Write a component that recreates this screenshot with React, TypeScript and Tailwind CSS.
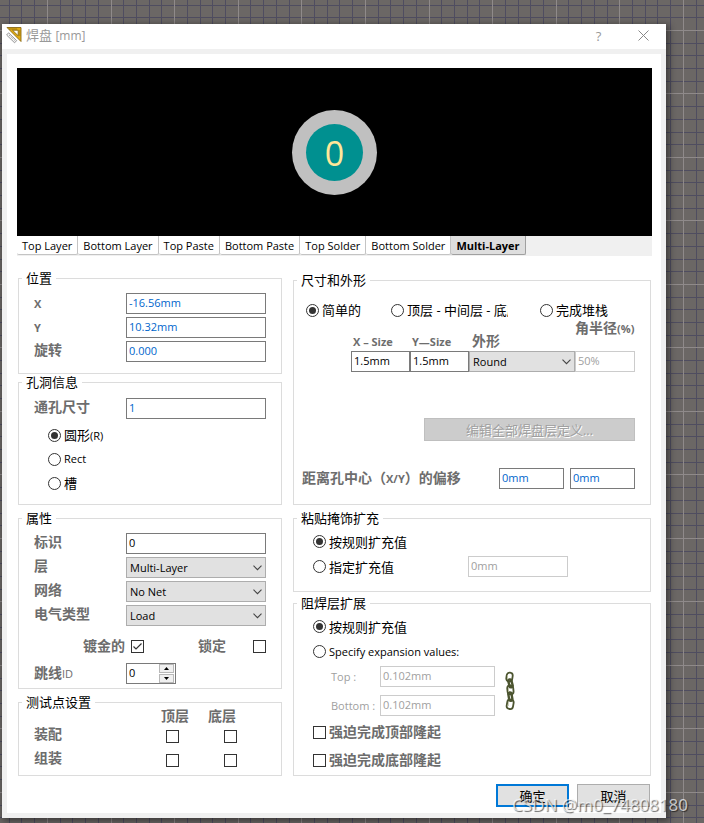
import { useId, useState } from "react";
import type { ReactNode } from "react";

const gridX = Array.from({ length: 200 }, (_, k) => ({
  at: Math.floor(47.4 + (k - 3) * 12.72),
  major: (k - 3) % 5 === 0,
}));
const gridY = Array.from({ length: 120 }, (_, k) => ({
  at: Math.floor(30.4 + (k - 2) * 12.7),
  major: (k - 2) % 5 === 0,
}));

function WorkspaceGrid() {
  return (
    <svg className="absolute inset-0 h-full w-full" aria-hidden="true">
      {[false, true].map((major) => (
        <g key={String(major)} fill={major ? "#8f8a8a" : "#4f4d60"}>
          {gridX.filter((l) => l.major === major).map((l) => (
            <rect key={`x${l.at}`} x={l.at} y="0" width="1" height="100%" />
          ))}
          {gridY.filter((l) => l.major === major).map((l) => (
            <rect key={`y${l.at}`} x="0" y={l.at} width="100%" height="1" />
          ))}
        </g>
      ))}
    </svg>
  );
}

function Group({ title, className, children }: { title: string; className: string; children: ReactNode }) {
  return (
    <fieldset className="min-w-0 border border-[#dcdcdc]">
      <legend className="ml-[3px] px-1 text-[13px] leading-4 text-black">{title}</legend>
      <div className={className}>{children}</div>
    </fieldset>
  );
}

const captionClass = "whitespace-nowrap text-[14px] font-bold leading-4 text-[#6d6d6d]";
const boxClass = "block h-[21px] w-full min-w-0 border bg-white px-[2px] pb-[3px] text-[11px] leading-4 outline-none";

function TextBox({ id, value, tone = "blue", label }: { id?: string; value: string; tone?: "blue" | "black" | "off"; label?: string }) {
  const tones = {
    blue: "border-[#7a7a7a] text-[#0066cc]",
    black: "border-[#7a7a7a] text-black",
    off: "border-[#cccccc] text-[#a0a0a0]",
  };
  return (
    <input id={id} aria-label={label} type="text" defaultValue={value} disabled={tone === "off"} className={`${boxClass} ${tones[tone]}`} />
  );
}

function Field({ label, value, tone }: { label: string; value: string; tone?: "blue" | "black" }) {
  const id = useId();
  const latin = label < "a";
  return (
    <>
      <label htmlFor={id} className={latin ? "self-center text-[11px] font-bold leading-4 text-[#6d6d6d]" : `pt-px ${captionClass}`}>
        {label}
      </label>
      <TextBox id={id} value={value} tone={tone} />
    </>
  );
}

function DropDown({ id, options }: { id: string; options: string[] }) {
  return (
    <div className="relative">
      <select id={id} className="block h-[21px] w-full appearance-none border border-[#adadad] bg-[#e1e1e1] pl-[3px] text-[11px] leading-4 text-black outline-none">
        {options.map((o) => (
          <option key={o}>{o}</option>
        ))}
      </select>
      <svg className="pointer-events-none absolute top-[8px] right-[4px]" width="9" height="6" viewBox="0 0 9 6" fill="none" stroke="#444" strokeWidth="1.1">
        <path d="M0.5 0.7 4.5 4.7 8.5 0.7" />
      </svg>
    </div>
  );
}

function DropField({ label, options }: { label: string; options: string[] }) {
  const id = useId();
  return (
    <>
      <label htmlFor={id} className={`pt-px ${captionClass}`}>{label}</label>
      <DropDown id={id} options={options} />
    </>
  );
}

function Radio({ name, checked, children, className = "" }: { name: string; checked?: boolean; children: ReactNode; className?: string }) {
  return (
    <label className={`flex items-center gap-[3px] whitespace-nowrap text-[13px] leading-4 text-black ${className}`}>
      <input
        type="radio"
        name={name}
        defaultChecked={checked}
        className="size-[13px] shrink-0 appearance-none rounded-full border border-[#333] bg-white bg-clip-content p-[2px] checked:bg-[#333]"
      />
      {children}
    </label>
  );
}

function Check({ id, label, checked }: { id?: string; label?: string; checked?: boolean }) {
  return (
    <span className="relative inline-block size-[13px] shrink-0">
      <input id={id} aria-label={label} type="checkbox" defaultChecked={checked} className="peer block size-[13px] appearance-none border border-[#333] bg-white" />
      <svg className="pointer-events-none absolute inset-0 hidden peer-checked:block" width="13" height="13" fill="none" stroke="#333" strokeWidth="1.2">
        <path d="M2.5 6.5 5 9 10.5 3.5" />
      </svg>
    </span>
  );
}

function TitleIcon() {
  return (
    <svg width="16" height="17" viewBox="0 0 16 17" aria-hidden="true">
      <path fillRule="evenodd" d="M1 0.5H15V14.5ZM6.5 3.2 12.2 8.8V3.2Z" fill="#e2ac12" stroke="#8a6a14" strokeWidth="0.9" />
      <path d="M4 1.2v1.6M6 1.2v1.6M8 1.2v1.6M10 1.2v1.6M12.8 4h1.6M12.8 6h1.6M12.8 8h1.6" stroke="#7a5c10" strokeWidth="0.7" />
      <path d="M2.6 5.8 10.6 13.6 8.6 15.8 0.6 8Z" fill="#f4f4f4" stroke="#8c8c8c" strokeWidth="0.9" />
      <path d="M3.2 8.2 8.6 13.4" stroke="#9a9a9a" strokeWidth="1" strokeDasharray="1.2 1" />
    </svg>
  );
}

function ChainIcon() {
  return (
    <svg width="12" height="40" viewBox="0 0 12 40" fill="none" stroke="#4c5530" aria-hidden="true">
      <g strokeWidth="1.8">
        <rect x="2.5" y="1.5" width="6" height="9" rx="3" transform="rotate(8 5 6)" />
        <rect x="3.4" y="14.5" width="6" height="9" rx="3" transform="rotate(-6 6 19)" />
        <rect x="3" y="28.5" width="6.4" height="9.5" rx="3" transform="rotate(10 6 33)" />
      </g>
      <g strokeWidth="2.4">
        <rect x="4.8" y="8.5" width="3.2" height="8" rx="1.6" transform="rotate(-14 6 12)" />
        <rect x="4.8" y="21.5" width="3.2" height="8.5" rx="1.6" transform="rotate(-10 6 26)" />
      </g>
      <path d="M3.5 4v4M4.5 17v4M4.4 31v4" stroke="#b5ba93" strokeWidth="0.7" />
    </svg>
  );
}

const layers = ["Top Layer", "Bottom Layer", "Top Paste", "Bottom Paste", "Top Solder", "Bottom Solder", "Multi-Layer"];

function LayerTabs() {
  const [active, setActive] = useState("Multi-Layer");
  return (
    <div role="tablist" className="flex h-5 items-start bg-[#f0f0f0]">
      {layers.map((l) => (
        <button
          key={l}
          type="button"
          role="tab"
          aria-selected={l === active}
          onClick={() => setActive(l)}
          className={`h-[19px] rounded-b-[2px] border-r border-b px-[5px] pt-[2px] text-[11px] leading-4 whitespace-nowrap text-black ${
            l === active ? "border-[#a0a0a0] bg-[#dedede] font-bold" : "border-[#c4c4c4] bg-white"
          }`}
        >
          {l}
        </button>
      ))}
    </div>
  );
}

function ShapeGroup() {
  const id = useId();
  return (
    <Group title="尺寸和外形" className="pt-3 pr-[15px] pb-[15px] pl-2">
      <div className="flex h-5 items-center pl-1">
        <Radio name="stack" checked className="w-[85px]">简单的</Radio>
        <Radio name="stack" className="w-[149px]">
          <span className="w-[101px] overflow-hidden">顶层 - 中间层 - 底层</span>
        </Radio>
        <Radio name="stack">完成堆栈</Radio>
      </div>
      <div className="ml-auto grid w-fit grid-cols-[59px_59px_106px_60px] grid-rows-[31px_21px]">
        <label htmlFor={`${id}x`} className="self-end pb-px pl-[2px] text-[11px] font-bold leading-4 text-[#6d6d6d]">X – Size</label>
        <label htmlFor={`${id}y`} className="self-end pb-px pl-[2px] text-[11px] font-bold leading-4 text-[#6d6d6d]">Y—Size</label>
        <label htmlFor={`${id}s`} className={`self-end pb-[2px] pl-[3px] ${captionClass}`}>外形</label>
        <label htmlFor={`${id}r`} className={captionClass}>
          角半径<span className="text-[11px]">(%)</span>
        </label>
        <TextBox id={`${id}x`} value="1.5mm" tone="black" />
        <TextBox id={`${id}y`} value="1.5mm" tone="black" />
        <DropDown id={`${id}s`} options={["Round", "Rectangular", "Octagonal"]} />
        <TextBox id={`${id}r`} value="50%" tone="off" />
      </div>
      <button type="button" disabled className="mt-[46px] ml-auto block h-[23px] w-[211px] border border-[#bfbfbf] bg-[#cccccc] text-[13px] leading-4 text-[#a0a0a0] [text-shadow:1px_1px_0_#fff]">
        编辑全部焊盘层定义...
      </button>
      <div className="mt-[27px] flex items-center gap-[6px]">
        <span className={`mr-auto ${captionClass}`}>
          距离孔中心（<span className="text-[11px]">X/Y</span>）的偏移
        </span>
        <div className="w-[65px]"><TextBox value="0mm" label="X 偏移" /></div>
        <div className="w-[65px]"><TextBox value="0mm" label="Y 偏移" /></div>
      </div>
    </Group>
  );
}

export default function App() {
  const id = useId();
  return (
    <div className="relative min-h-screen overflow-hidden bg-[#6b6765] pt-6 pr-[38px] pb-[5px] pl-[2px] font-['Open_Sans','Noto_Sans_CJK_SC',sans-serif]">
      <WorkspaceGrid />
      <main className="relative border-x-[5px] border-b-[5px] border-[#f0f0f0] bg-white shadow-[2px_2px_7px_1px_rgba(0,0,0,0.45)]">
        <header className="-mx-[5px] flex h-[25px] items-center bg-white pb-[2px] pl-1 text-[#999]">
          <TitleIcon />
          <h1 className="ml-1 text-[13px] leading-4">焊盘 <span className="text-[12px]">[mm]</span></h1>
          <button type="button" aria-label="帮助" className="ml-auto w-[45px] text-[13px] leading-4">?</button>
          <button type="button" aria-label="关闭" className="flex w-[45px] justify-center">
            <svg width="11" height="11" fill="none" stroke="#888"><path d="M0.5 0.5 10.5 10.5M10.5 0.5 0.5 10.5" /></svg>
          </button>
        </header>
        <div className="-mx-[5px] h-[5px] bg-[#f0f0f0]" />
        <div className="pt-[14px] pr-[9px] pb-[6px] pl-[10px]">
          <div className="flex h-[168px] items-start justify-center bg-black pt-[42px]">
            <div className="flex size-[85px] items-center justify-center rounded-full bg-[#c0c0c0]">
              <div className="flex size-[57px] items-center justify-center rounded-full bg-[#009090] text-[34px] leading-none text-[#ffe799]">0</div>
            </div>
          </div>
          <LayerTabs />
          <div className="grid grid-cols-[264px_1fr] gap-[11px] px-px pt-[14px]">
            <div>
              <Group title="位置" className="grid grid-cols-[92px_1fr] gap-y-[3px] px-[15px] pt-[7px] pb-[11px]">
                <Field label="X" value="-16.56mm" />
                <Field label="Y" value="10.32mm" />
                <Field label="旋转" value="0.000" />
              </Group>
              <Group title="孔洞信息" className="px-[15px] pt-2 pb-[9px]">
                <div className="grid grid-cols-[92px_1fr]">
                  <Field label="通孔尺寸" value="1" />
                </div>
                <div className="flex flex-col pt-1 pl-[14px]">
                  <Radio name="hole" checked className="h-6"><span>圆形<span className="text-[11px]">(R)</span></span></Radio>
                  <Radio name="hole" className="h-6"><span className="text-[11px]">Rect</span></Radio>
                  <Radio name="hole" className="h-6">槽</Radio>
                </div>
              </Group>
              <div className="h-[5px]" />
              <Group title="属性" className="px-[15px] pt-[7px] pb-1">
                <div className="grid grid-cols-[92px_1fr] gap-y-[3px]">
                  <Field label="标识" value="0" tone="black" />
                  <DropField label="层" options={["Multi-Layer", "Top Layer", "Bottom Layer"]} />
                  <DropField label="网络" options={["No Net"]} />
                  <DropField label="电气类型" options={["Load", "Source", "Terminator"]} />
                </div>
                <div className="mt-[10px] flex h-5 items-center pl-[49px]">
                  <label htmlFor={`${id}p`} className={captionClass}>镀金的</label>
                  <span className="ml-[6px] flex"><Check id={`${id}p`} checked /></span>
                  <label htmlFor={`${id}l`} className={`mr-[27px] ml-auto ${captionClass}`}>锁定</label>
                  <Check id={`${id}l`} />
                </div>
                <div className="mt-[7px] grid grid-cols-[92px_50px] items-center">
                  <label htmlFor={`${id}j`} className={captionClass}>跳线<span className="text-[11px] font-normal">ID</span></label>
                  <div className="flex h-[21px] border border-[#7a7a7a] bg-white pr-px">
                    <input id={`${id}j`} type="text" defaultValue="0" className="min-w-0 flex-1 pb-[2px] pl-[2px] text-[11px] leading-4 outline-none" />
                    <div className="flex w-[15px] flex-col gap-px">
                      <button type="button" aria-label="增加" className="flex flex-1 items-center justify-center border border-[#b8b8b8] bg-[#f0f0f0]">
                        <svg width="5" height="3"><path d="M0 3 2.5 0 5 3Z" /></svg>
                      </button>
                      <button type="button" aria-label="减少" className="flex flex-1 items-center justify-center border border-[#b8b8b8] bg-[#f0f0f0]">
                        <svg width="5" height="3"><path d="M0 0 2.5 3 5 0Z" /></svg>
                      </button>
                    </div>
                  </div>
                </div>
              </Group>
              <div className="h-[5px]" />
              <Group title="测试点设置" className="px-[15px] pb-[3px]">
                <table className="-mt-[2px] table-fixed text-left">
                  <thead>
                    <tr className="h-4">
                      <td className="w-[113px] p-0" />
                      <th scope="col" className={`w-[51px] p-0 pl-[14px] ${captionClass}`}>顶层</th>
                      <th scope="col" className={`w-[65px] p-0 pl-[10px] ${captionClass}`}>底层</th>
                    </tr>
                  </thead>
                  <tbody>
                    {["装配", "组装"].map((r) => (
                      <tr key={r} className="h-6">
                        <th scope="row" className={`p-0 pb-1 ${captionClass}`}>{r}</th>
                        <td className="p-0 pl-[19px] leading-none"><div className="flex"><Check label={`${r} 顶层`} /></div></td>
                        <td className="p-0 pl-[26px] leading-none"><div className="flex"><Check label={`${r} 底层`} /></div></td>
                      </tr>
                    ))}
                  </tbody>
                </table>
              </Group>
            </div>
            <div className="pt-[2px]">
              <ShapeGroup />
              <div className="h-[5px]" />
              <Group title="粘贴掩饰扩充" className="pt-[3px] pb-3 pl-[19px]">
                <Radio name="paste" checked className="h-[25px]">按规则扩充值</Radio>
                <div className="flex h-[25px] items-center">
                  <Radio name="paste" className="w-[155px]">指定扩充值</Radio>
                  <div className="w-[100px]"><TextBox value="0mm" tone="off" label="粘贴扩充值" /></div>
                </div>
              </Group>
              <div className="h-[3px]" />
              <Group title="阻焊层扩展" className="pt-[3px] pb-px pl-[19px]">
                <Radio name="mask" checked className="h-[25px]">按规则扩充值</Radio>
                <Radio name="mask" className="h-[25px]"><span className="text-[11px]">Specify expansion values:</span></Radio>
                <div className="mt-[2px] flex items-center gap-[9px] pl-[18px]">
                  <div className="grid grid-cols-[49px_115px] items-center gap-y-2 text-[11px] leading-4 whitespace-nowrap text-[#a0a0a0]">
                    <label htmlFor={`${id}t`}>Top :</label>
                    <TextBox id={`${id}t`} value="0.102mm" tone="off" />
                    <label htmlFor={`${id}b`}>Bottom :</label>
                    <TextBox id={`${id}b`} value="0.102mm" tone="off" />
                  </div>
                  <ChainIcon />
                </div>
                <div className="mt-[2px]">
                  {["强迫完成顶部隆起", "强迫完成底部隆起"].map((t) => (
                    <label key={t} className={`flex h-7 items-center gap-[3px] ${captionClass}`}>
                      <Check />
                      {t}
                    </label>
                  ))}
                </div>
              </Group>
            </div>
          </div>
          <div className="flex justify-end gap-2 pt-2 pr-[2px] text-[13px] leading-4 text-black">
            <button type="button" className="h-[23px] w-[73px] border-2 border-[#0078d7] bg-[#e1e1e1]">确定</button>
            <button type="button" className="h-[23px] w-[73px] border border-[#adadad] bg-[#e1e1e1]">取消</button>
          </div>
        </div>
      </main>
      <p className="pointer-events-none absolute right-4 bottom-2 font-['Noto_Sans',sans-serif] text-[17px] leading-5 text-white/70 [text-shadow:1px_1px_1px_rgba(0,0,0,0.6)]">
        CSDN @m0_74808180
      </p>
    </div>
  );
}
